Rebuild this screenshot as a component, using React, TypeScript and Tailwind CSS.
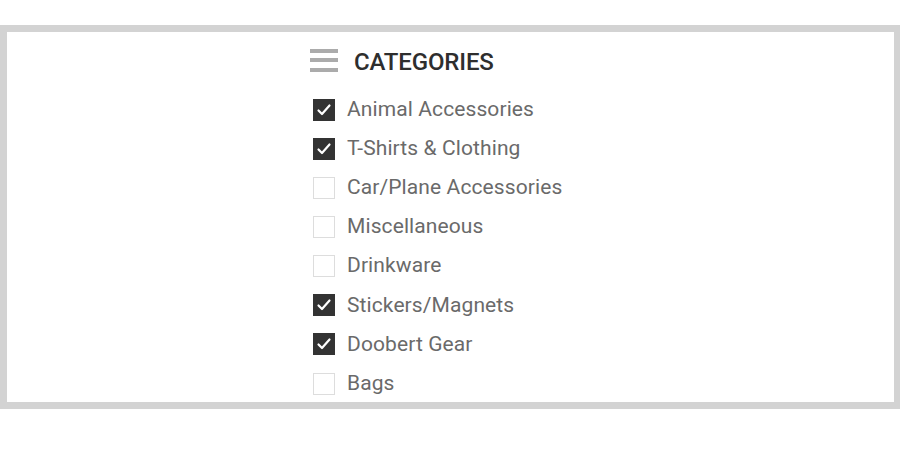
import React, { useState } from 'react';

const initialCategories = [
  { name: 'Animal Accessories', checked: true },
  { name: 'T-Shirts & Clothing', checked: true },
  { name: 'Car/Plane Accessories', checked: false },
  { name: 'Miscellaneous', checked: false },
  { name: 'Drinkware', checked: false },
  { name: 'Stickers/Magnets', checked: true },
  { name: 'Doobert Gear', checked: true },
  { name: 'Bags', checked: false },
];

export default function App() {
  const [categories, setCategories] = useState(initialCategories);

  const toggle = (index: number) => {
    setCategories(categories.map((c, i) => (i === index ? { ...c, checked: !c.checked } : c)));
  };

  return (
    <div className="w-[900px] h-[463px] bg-white pt-[25px] font-['Roboto',sans-serif]">
      <div className="h-[384px] border-[7px] border-r-[6px] border-[#d3d3d3] pl-[303px]">
        {/* Heading */}
        <div className="flex items-center h-[58px] pt-[3px] pb-[1px]">
          <div className="flex flex-col gap-[5.5px] w-[28px] mb-[4px]">
            <span className="block h-[4px] bg-[#ababab]" />
            <span className="block h-[4px] bg-[#ababab]" />
            <span className="block h-[4px] bg-[#ababab]" />
          </div>
          <h2 className="ml-[16px] text-[24px] font-medium text-[#2e2e2e] tracking-[-0.15px]">CATEGORIES</h2>
        </div>

        {/* Category list */}
        <ul className="flex flex-col">
          {categories.map((cat, i) => (
            <li key={cat.name} className="h-[39.15px] flex items-center">
              <button onClick={() => toggle(i)} className="flex items-center cursor-pointer">
                {cat.checked ? (
                  <span className="ml-[3px] w-[22px] h-[22px] bg-[#333333] flex items-center justify-center">
                    <svg width="16" height="16" viewBox="0 0 16 16" fill="none">
                      <path d="M2.5 8.5 L6 12 L13.5 3.5" stroke="white" strokeWidth="2.2" strokeLinecap="round" strokeLinejoin="round" />
                    </svg>
                  </span>
                ) : (
                  <span className="ml-[3px] w-[22px] h-[22px] border-[1.5px] border-[#dddddd] bg-white" />
                )}
                <span className="ml-[12px] text-[21px] text-[#6a6a6a] tracking-[0.1px]">{cat.name}</span>
              </button>
            </li>
          ))}
        </ul>
      </div>
    </div>
  );
}
